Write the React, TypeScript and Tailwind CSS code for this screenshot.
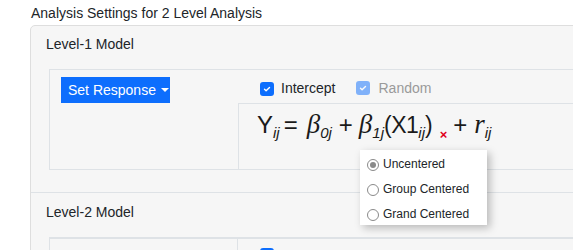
import React from "react";

const font = "font-['Liberation_Sans',Arial,sans-serif]";

function Check({faded = false}: {faded?: boolean}) {
  return (
    <span
      className={`inline-flex items-center justify-center w-[14px] h-[14px] rounded-[3px] bg-[#0d6efd] ${faded ? "opacity-50" : ""}`}
    >
      <svg viewBox="0 0 20 20" className="w-[10px] h-[10px]">
        <path d="M5 10.5l3.2 3.2L15 7" fill="none" stroke="#fff" strokeWidth="2.8" strokeLinecap="round" strokeLinejoin="round"/>
      </svg>
    </span>
  );
}

function Radio({checked = false}: {checked?: boolean}) {
  return (
    <span className="inline-flex items-center justify-center w-[12px] h-[12px] rounded-full border border-[#8a8a8a] bg-white">
      {checked && <span className="w-[6px] h-[6px] rounded-full bg-[#8a8a8a]"/>}
    </span>
  );
}

function Formula() {
  const sub = "text-[15px] italic relative top-[5px]";
  const beta = "font-['Liberation_Serif',serif] italic text-[27px]";
  return (
    <div className="flex items-baseline pl-[18px] pt-[7px] text-[24px] text-[#1a1a1a] leading-none">
      <span>Y</span>
      <span className={sub}>ij</span>
      <span className="ml-[4px]">=</span>
      <span className={`${beta} ml-[9px]`}>β</span>
      <span className={sub}>0j</span>
      <span className="ml-[7px]">+</span>
      <span className={`${beta} ml-[6px]`}>β</span>
      <span className={sub}>1j</span>
      <span className="text-[23px] tracking-[-0.5px]">(X1</span>
      <span className={sub}>ij</span>
      <span className="text-[23px]">)</span>
      <span className="text-[13px] text-[#e0001a] ml-[7px] relative top-[6px] font-bold">×</span>
      <span className="ml-[6px]">+</span>
      <span className={`${beta} ml-[7px]`}>r</span>
      <span className={sub}>ij</span>
    </div>
  );
}

export default function App() {
  return (
    <div className={`w-[573px] h-[250px] overflow-hidden bg-white relative text-[#212529] ${font}`}>
      <div className="h-[25px] pl-[31px] pt-[5px] text-[14px] leading-[16px]">Analysis Settings for 2 Level Analysis</div>
      <div className="ml-[30px] w-[600px] border border-[#dedede] rounded-[5px] bg-[#f6f6f6]">
        {/* level 1 */}
        <div className="pb-[22px] border-b border-[#dee2e6]">
          <div className="h-[43px] pl-[15px] pt-[10px] text-[14px] leading-[16px]">Level-1 Model</div>
          <div className="ml-[18px] h-[101px] border border-[#dee2e6] flex">
            <div className="w-[188px] pl-[11px] pt-[7px]">
              <button className="h-[26px] w-[109px] bg-[#0d6efd] text-white text-[14px] flex items-center pl-[7px] gap-[5px]">
                Set Response
                <span className="w-0 h-0 border-l-[4px] border-r-[4px] border-t-[4px] border-l-transparent border-r-transparent border-t-white"/>
              </button>
            </div>
            <div className="flex-1 flex flex-col">
              <div className="h-[33px] flex items-center pl-[22px] text-[14px] pt-[4px]">
                <Check/>
                <span className="ml-[7px]">Intercept</span>
                <span className="ml-[21px]"><Check faded/></span>
                <span className="ml-[8px] text-[#9a9a9a]">Random</span>
              </div>
              <div className="flex-1 border-l border-t border-[#dee2e6]">
                <Formula/>
              </div>
            </div>
          </div>
        </div>
        {/* level 2 */}
        <div>
          <div className="h-[44px] pl-[15px] pt-[11px] text-[14px] leading-[16px]">Level-2 Model</div>
          <div className="ml-[18px] h-[80px] border-t-[2px] border-l border-[#dee2e6] flex">
            <div className="w-[188px] border-r border-[#dee2e6]"/>
            <div className="flex items-start pl-[22px] pt-[9px] text-[14px]">
              <Check/>
              <span className="ml-[7px]">Intercept</span>
              <span className="ml-[21px]"><Check/></span>
              <span className="ml-[8px]">Random</span>
            </div>
          </div>
        </div>
      </div>
      {/* centering menu */}
      <div className="absolute left-[360px] top-[150px] w-[127px] h-[75px] bg-white shadow-[3px_3px_8px_rgba(0,0,0,0.25)] flex flex-col justify-center gap-[8px] pl-[7px] pt-[4px] text-[12px] leading-[17px]">
        <div className="flex items-center gap-[4px]"><Radio checked/>Uncentered</div>
        <div className="flex items-center gap-[4px]"><Radio/>Group Centered</div>
        <div className="flex items-center gap-[4px]"><Radio/>Grand Centered</div>
      </div>
    </div>
  );
}
